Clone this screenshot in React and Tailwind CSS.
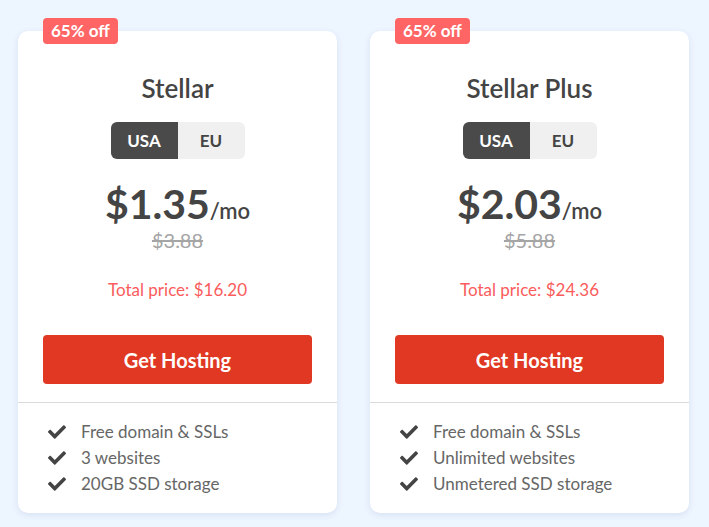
import React from 'react';
import { FaCheck } from 'react-icons/fa';

const plans = [
  {
    name: 'Stellar',
    price: '$1.35',
    oldPrice: '$3.88',
    total: '$16.20',
    features: ['Free domain & SSLs', '3 websites', '20GB SSD storage'],
  },
  {
    name: 'Stellar Plus',
    price: '$2.03',
    oldPrice: '$5.88',
    total: '$24.36',
    features: ['Free domain & SSLs', 'Unlimited websites', 'Unmetered SSD storage'],
  },
];

const PlanCard = ({ plan }) => (
  <div className="relative w-[319px] rounded-[10px] bg-white shadow-[0_2px_6px_rgba(60,90,140,0.12)]">
    {/* discount badge */}
    <span className="absolute -top-[13px] left-[25px] rounded-[4px] bg-[#ff6565] px-[8px] h-[26px] leading-[26px] text-[17px] font-bold text-white">
      65% off
    </span>

    <div className="flex flex-col items-center px-[25px] pt-[41px]">
      <h2 className="text-[26px] leading-[32px] font-semibold text-[#444]">{plan.name}</h2>

      <div className="mt-[18px] flex h-[37px] w-[134px] overflow-hidden rounded-[6px] text-[17px] font-bold">
        <button className="flex-1 bg-[#4a4a4a] text-white">USA</button>
        <button className="flex-1 bg-[#f0f0f0] text-[#444]">EU</button>
      </div>

      <div className="mt-[23px] flex items-baseline text-[#444]">
        <span className="text-[41px] leading-[44px] font-bold">{plan.price}</span>
        <span className="text-[22px] font-semibold">/mo</span>
      </div>
      <div className="mt-[2px] text-[20px] leading-[22px] text-[#a5a5a5] line-through decoration-[#a5a5a5]">
        {plan.oldPrice}
      </div>

      <div className="mt-[28px] text-[17px] leading-[22px] text-[#fa5c5c]">
        Total price: {plan.total}
      </div>

      <button className="mt-[34px] h-[49px] w-full rounded-[4px] bg-[#e03822] text-[20px] font-bold text-white">
        Get Hosting
      </button>
    </div>

    <div className="mt-[18px] border-t border-[#dcdcdc] px-[30px] pt-[16px] pb-[16px]">
      <ul>
        {plan.features.map((f) => (
          <li key={f} className="flex items-center text-[17px] leading-[26px] text-[#666]">
            <FaCheck className="mr-[15px] h-[18px] w-[18px] text-[#444]" />
            {f}
          </li>
        ))}
      </ul>
    </div>
  </div>
);

export default function App() {
  return (
    <div
      className="min-h-[527px] bg-[#edf5ff] pl-[18px] pt-[31px]"
      style={{ fontFamily: 'Lato, "Noto Sans", sans-serif' }}
    >
      <div className="flex gap-[33px]">
        {plans.map((p) => (
          <PlanCard key={p.name} plan={p} />
        ))}
      </div>
    </div>
  );
}
